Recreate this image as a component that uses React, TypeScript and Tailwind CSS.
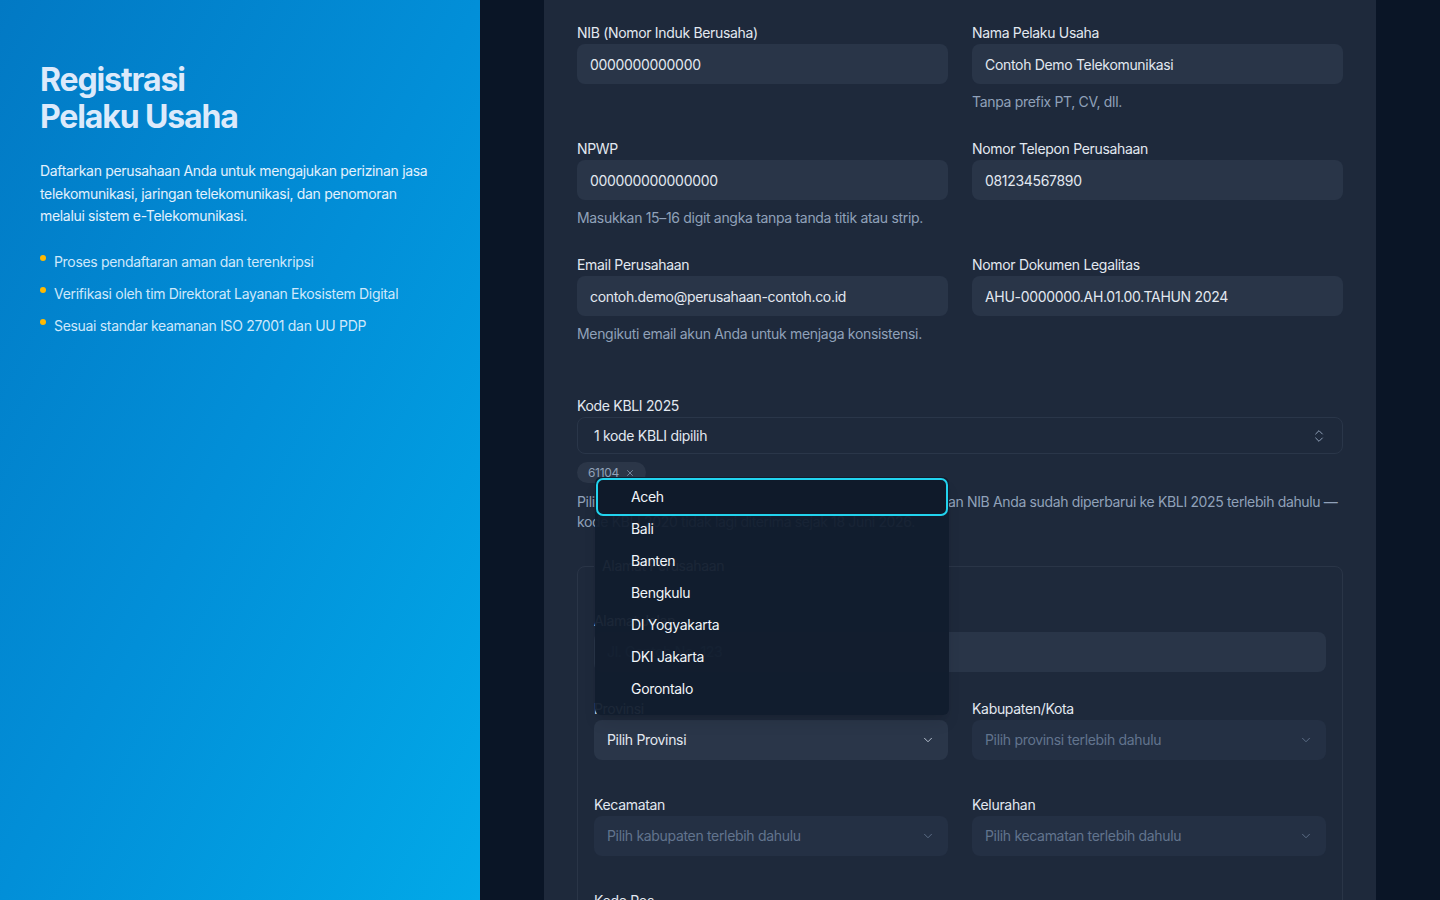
import { ChevronDown, ChevronsUpDown, X } from 'lucide-react'

const font = { fontFamily: 'Inter, "Noto Sans", sans-serif' }

const provinces = ['Aceh', 'Bali', 'Banten', 'Bengkulu', 'DI Yogyakarta', 'DKI Jakarta', 'Gorontalo']

function Field({ label, value, help }: { label: string; value: string; help?: string }) {
  return (
    <div>
      <label className="mb-[3px] block pt-px text-sm leading-4 text-slate-200">{label}</label>
      <div className="flex h-10 items-center rounded-lg bg-[#293548] px-[13px] pt-0.5 text-sm text-slate-200">
        {value}
      </div>
      {help && <p className="mt-2 text-sm leading-5 text-slate-400">{help}</p>}
    </div>
  )
}

function Select({ label, value, disabled }: { label: string; value: string; disabled?: boolean }) {
  return (
    <div>
      <label className="mb-[3px] block pt-px text-sm leading-4 text-slate-200">{label}</label>
      <div
        className={`flex h-10 items-center justify-between rounded-lg px-[13px] text-sm ${
          disabled ? 'bg-[#243044] text-slate-500' : 'bg-[#2a3649] text-slate-200'
        }`}
      >
        <span>{value}</span>
        <ChevronDown size={14} strokeWidth={1.5} className={disabled ? 'text-slate-500' : 'text-slate-300'} />
      </div>
    </div>
  )
}

export default function App() {
  return (
    <div className="flex h-[900px] overflow-hidden bg-[#0a1526] tracking-[-0.02em]" style={font}>
      {/* Panel kiri */}
      <aside className="w-[480px] shrink-0 bg-gradient-to-br from-[#0279c4] via-[#028fd8] to-[#02a9e8] px-10 pt-[61px]">
        <h1 className="text-[32px] font-bold leading-[37px] tracking-[-0.035em] text-[#dceafb]">
          Registrasi
          <br />
          Pelaku Usaha
        </h1>
        <p className="mt-[25px] text-sm leading-[22.5px] text-[#e3f1fd]">
          Daftarkan perusahaan Anda untuk mengajukan perizinan jasa telekomunikasi, jaringan telekomunikasi, dan
          penomoran melalui sistem e-Telekomunikasi.
        </p>
        <ul className="mt-6 space-y-3">
          {[
            'Proses pendaftaran aman dan terenkripsi',
            'Verifikasi oleh tim Direktorat Layanan Ekosistem Digital',
            'Sesuai standar keamanan ISO 27001 dan UU PDP',
          ].map((t) => (
            <li key={t} className="flex gap-2 text-sm leading-5 text-[#cfe8fb]">
              <span className="mt-[3px] h-[6px] w-[6px] shrink-0 rounded-full bg-amber-400" />
              {t}
            </li>
          ))}
        </ul>
      </aside>

      {/* Form */}
      <main className="flex-1 px-16">
        <div className="relative min-h-full bg-[#1e293b] px-[33px] pt-6">
          <div className="grid grid-cols-2 gap-x-6 gap-y-7">
            <Field label="NIB (Nomor Induk Berusaha)" value="0000000000000" />
            <Field label="Nama Pelaku Usaha" value="Contoh Demo Telekomunikasi" help="Tanpa prefix PT, CV, dll." />
            <Field
              label="NPWP"
              value="000000000000000"
              help="Masukkan 15–16 digit angka tanpa tanda titik atau strip."
            />
            <Field label="Nomor Telepon Perusahaan" value="081234567890" />
            <Field
              label="Email Perusahaan"
              value="contoh.demo@perusahaan-contoh.co.id"
              help="Mengikuti email akun Anda untuk menjaga konsistensi."
            />
            <Field label="Nomor Dokumen Legalitas" value="AHU-0000000.AH.01.00.TAHUN 2024" />
          </div>

          {/* KBLI */}
          <div className="mt-[53px]">
            <label className="mb-[3px] block pt-px text-sm leading-4 text-slate-200">Kode KBLI 2025</label>
            <div className="flex h-[37px] items-center justify-between rounded-lg border border-[#2a3649] pl-4 pr-[15px] text-sm text-slate-200">
              <span>1 kode KBLI dipilih</span>
              <ChevronsUpDown size={16} strokeWidth={1.5} className="text-slate-400" />
            </div>
            <div className="mt-2 inline-flex h-[21px] items-center gap-1.5 rounded-full bg-[#2b3648] px-[11px] text-xs text-slate-400">
              61104
              <X size={10} strokeWidth={1.75} />
            </div>
            <p className="mt-[9px] text-sm leading-5 tracking-[-0.025em] text-slate-400">
              Pilih kode KBLI 2025 sesuai NIB terbaru Anda (OSS). Pastikan NIB Anda sudah diperbarui ke KBLI 2025
              terlebih dahulu — kode KBLI 2020 tidak lagi diterima sejak 18 Juni 2026.
            </p>
          </div>

          {/* Alamat */}
          <fieldset className="mt-6 rounded-lg border border-[#2a3547] px-4 pb-8">
            <legend className="px-2 text-sm leading-5 text-slate-300">Alamat Perusahaan</legend>
            <div className="mt-9">
              <label className="mb-[3px] block pt-px text-sm leading-4 text-slate-200">Alamat Jalan</label>
              <div className="flex h-10 items-center rounded-lg bg-[#293548] px-[13px] text-sm text-slate-500">
                Jl. Contoh No. 123
              </div>
            </div>
            <div className="mt-7 grid grid-cols-2 gap-x-6 gap-y-9">
              <Select label="Provinsi" value="Pilih Provinsi" />
              <Select label="Kabupaten/Kota" value="Pilih provinsi terlebih dahulu" disabled />
              <Select label="Kecamatan" value="Pilih kabupaten terlebih dahulu" disabled />
              <Select label="Kelurahan" value="Pilih kecamatan terlebih dahulu" disabled />
              <div>
                <label className="mb-[3px] block pt-px text-sm leading-4 text-slate-200">Kode Pos</label>
                <div className="h-10 rounded-lg bg-[#293548]" />
              </div>
            </div>
          </fieldset>

          {/* Dropdown provinsi terbuka */}
          <div className="absolute left-[51px] top-[477px] w-[354px] rounded-md bg-[#111c2d]/95 pb-[10px] pt-px shadow-lg">
            {provinces.map((p, i) =>
              i === 0 ? (
                <div
                  key={p}
                  className="mx-px -mb-[3px] flex h-[38px] items-center rounded-[7px] border-2 border-[#22d3ee] bg-[#0f1a2a] pl-[33px] text-sm text-slate-100"
                >
                  {p}
                </div>
              ) : (
                <div key={p} className="flex h-8 items-center pl-9 text-sm text-slate-100">
                  {p}
                </div>
              ),
            )}
          </div>
        </div>
      </main>
    </div>
  )
}
